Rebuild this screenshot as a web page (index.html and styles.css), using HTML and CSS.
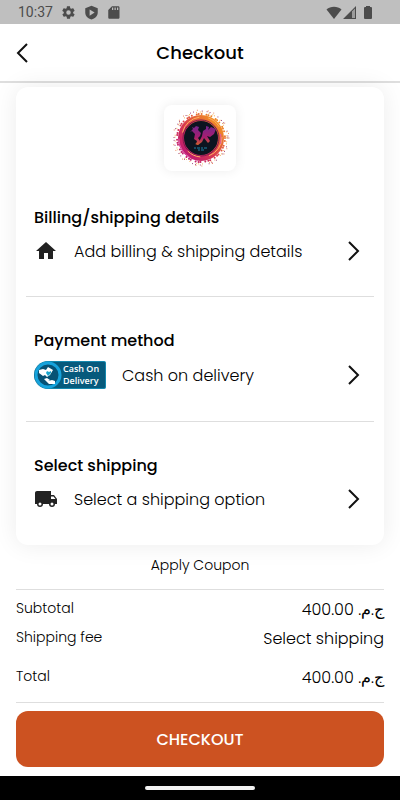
FILE: index.html
```html
<!DOCTYPE html>
<html lang="en">

<head>
    <meta charset="UTF-8">
    <meta name="viewport" content="width=device-width, initial-scale=1">
    <title>Checkout</title>
    <link rel="stylesheet" href="styles.css">
</head>

<body>
    <div class="status-bar">
        <span class="time">10:37</span>
        <svg class="status-icon" viewBox="0 0 24 24"><path d="M19.4 13a7.500 7.500 0 0 0 0-2l2.100-1.600c.2-.2.300-.4.100-.7l-2-3.400c-.1-.2-.4-.3-.6-.2l-2.500 1a7 7 0 0 0-1.700-1l-.4-2.700c0-.2-.2-.4-.5-.4h-4c-.2 0-.4.200-.5.400L9 5.100a7 7 0 0 0-1.700 1l-2.500-1c-.2-.1-.5 0-.6.200l-2 3.400c-.1.200-.1.500.1.700L4.500 11a7.500 7.500 0 0 0 0 2l-2.100 1.600c-.2.200-.2.400-.1.700l2 3.400c.1.200.4.300.6.200l2.500-1a7 7 0 0 0 1.700 1l.4 2.700c.1.200.2.400.5.400h4c.2 0 .4-.2.500-.4l.4-2.700a7 7 0 0 0 1.700-1l2.500 1c.2.100.5 0 .6-.2l2-3.400c.1-.2.100-.5-.1-.7zM12 15.600a3.600 3.600 0 1 1 0-7.200 3.600 3.600 0 0 1 0 7.200z"/></svg>
        <svg class="status-icon" viewBox="0 0 24 24"><path fill-rule="evenodd" d="M12 1 2 5v7c0 5.500 4.200 9.700 10 11 5.800-1.300 10-5.500 10-11V5zM9 7l8 5-8 5z"/></svg>
        <svg class="status-icon" viewBox="0 0 24 24"><path fill-rule="evenodd" d="M18 2H8L2 8v12c0 1.100.9 2 2 2h14c1 0 2-.9 2-2V4c0-1.100-1-2-2-2zM8 4h2v4H8zM12 4h2v4h-2zM16 4h2v4h-2z"/></svg>
        <div class="signals">
            <svg class="wifi" viewBox="0 0 16 13"><path d="M8 13 .5 3.500C4.500-.2 11.500-.2 15.500 3.500z"/></svg>
            <svg class="cell" viewBox="0 0 13 13"><path d="M13 0v13H0zM9 5.500V12h3V2.500z" fill-rule="evenodd"/><path d="M9 5.500 12 2.500V12H9z" opacity=".3"/></svg>
            <svg class="battery" viewBox="0 0 8 13"><path d="M2 0h4v1h1a1 1 0 0 1 1 1v10a1 1 0 0 1-1 1H1a1 1 0 0 1-1-1V2a1 1 0 0 1 1-1h1z"/></svg>
        </div>
    </div>

    <header class="header">
        <button class="back" type="button" aria-label="Back">
            <svg viewBox="0 0 12 20"><path d="M11 1 2 10l9 9"/></svg>
        </button>
        <h1 class="title">Checkout</h1>
    </header>

    <main class="content">
        <div class="card">
            <div class="logo">
                <svg viewBox="0 0 60 60">
                    <defs>
                        <linearGradient id="ring" x1="0" y1="1" x2="1" y2="0">
                            <stop offset="0" stop-color="#b5107c"/>
                            <stop offset=".45" stop-color="#d93a4e"/>
                            <stop offset="1" stop-color="#f7a31c"/>
                        </linearGradient>
                        <linearGradient id="dancers" x1="0" y1="0" x2="0" y2="1">
                            <stop offset="0" stop-color="#74268c"/>
                            <stop offset=".6" stop-color="#a81d70"/>
                            <stop offset="1" stop-color="#d2622c"/>
                        </linearGradient>
                    </defs>
                    <!-- paint splatter -->
                    <g fill="none" stroke-linecap="round">
                        <circle cx="31" cy="30" r="24" stroke="url(#ring)" stroke-width="2" stroke-dasharray="0 3 0 5 0 2"/>
                        <circle cx="31" cy="30" r="26" stroke="#f2a233" stroke-width="1" stroke-dasharray="0 4 0 2 0 7"/>
                        <circle cx="31" cy="30" r="27" stroke="#8f1d62" stroke-width="1" stroke-dasharray="0 9 0 5 0 3"/>
                        <circle cx="31" cy="30" r="28" stroke="#e8703a" stroke-width="1" stroke-dasharray="0 11 0 6 0 15"/>
                    </g>
                    <circle cx="31" cy="30" r="20" fill="#0c1420" stroke="url(#ring)" stroke-width="6"/>
                    <circle cx="31" cy="30" r="18" fill="none" stroke="#7e1650" stroke-width="1"/>
                    <circle cx="32" cy="29" r="20" fill="none" stroke="#ffb060" stroke-width="1" stroke-dasharray="24 9 14 20"/>
                    <circle cx="30" cy="31" r="21" fill="none" stroke="#e15aa8" stroke-width="1" stroke-dasharray="5 38 23 60"/>
                    <g fill="url(#dancers)">
                        <path d="m22 19 2 1 2-2 3 1-1 3 3 3-1 3-2 2 2 3-2 4-2-1 1-3-3-2 1-5-3-3-2 1 3-3z"/>
                        <path d="m36 18 3 1-1 3 3-3 5 2-2 5-4 3-3-1 3 5-2 2-4-5-2 4-4 3-3-1 4-2 3-6 1-5 3-2z"/>
                    </g>
                    <path d="M24 40h14M28 42h7" fill="none" stroke="#1a83a8" stroke-width="1" stroke-dasharray="2 1 3 1"/>
                </svg>
            </div>

            <section class="step">
                <h2 class="step-title">Billing/shipping details</h2>
                <button class="step-row" type="button">
                    <svg class="step-icon" viewBox="0 0 24 24"><path d="M10 20v-6h4v6h5v-8h3L12 3 2 12h3v8z"/></svg>
                    <span class="step-text">Add billing &amp; shipping details</span>
                    <svg class="chevron" viewBox="0 0 12 20"><path d="m1 1 9 9-9 9"/></svg>
                </button>
            </section>

            <section class="step">
                <h2 class="step-title">Payment method</h2>
                <button class="step-row payment" type="button">
                    <span class="cod">
                        <svg class="cod-icon" viewBox="0 0 28 28">
                            <circle cx="14" cy="14" r="12" fill="#075275" stroke="#16a3dc" stroke-width="3"/>
                            <path fill="#fff" d="m5 9 4-1 3 1 2-3 5 3-3 5-3 2-2-2-2 1-4-3zM10 18l3-1 3 2-2 1 4-1 3 1v3h-6z"/>
                            <path fill="#18a5cd" d="m13 10 2 1 2-1v2l-3 3-2-3z"/>
                        </svg>
                        <span class="cod-text">Cash On<br>Delivery</span>
                    </span>
                    <span class="step-text">Cash on delivery</span>
                    <svg class="chevron" viewBox="0 0 12 20"><path d="m1 1 9 9-9 9"/></svg>
                </button>
            </section>

            <section class="step">
                <h2 class="step-title">Select shipping</h2>
                <button class="step-row" type="button">
                    <svg class="step-icon" viewBox="0 0 24 24"><path fill-rule="evenodd" d="M20 8h-3V4H3c-1.100 0-2 .9-2 2v11h2a3 3 0 0 0 6 0h6a3 3 0 0 0 6 0h2v-5zM6 18.500a1.500 1.500 0 1 1 0-3 1.500 1.500 0 0 1 0 3zM19.500 9.500l2 2.500H17V9.500zM18 18.500a1.500 1.500 0 1 1 0-3 1.500 1.500 0 0 1 0 3z"/></svg>
                    <span class="step-text">Select a shipping option</span>
                    <svg class="chevron" viewBox="0 0 12 20"><path d="m1 1 9 9-9 9"/></svg>
                </button>
            </section>
        </div>

        <button class="coupon" type="button">Apply Coupon</button>

        <dl class="summary">
            <div class="summary-row">
                <dt>Subtotal</dt>
                <dd dir="rtl">ج.م. 400.00</dd>
            </div>
            <div class="summary-row">
                <dt>Shipping fee</dt>
                <dd>Select shipping</dd>
            </div>
            <div class="summary-row total">
                <dt>Total</dt>
                <dd dir="rtl">ج.م. 400.00</dd>
            </div>
        </dl>

        <button class="checkout" type="button">CHECKOUT</button>
    </main>

    <div class="nav-bar">
        <div class="nav-handle"></div>
    </div>
</body>

</html>
```

FILE: styles.css
```css
* {
    box-sizing: border-box;
}

body {
    display: flex;
    flex-direction: column;
    min-height: 100vh;
    margin: 0;
    background: #fff;
    color: #000;
    font-family: Poppins, Inter, "Noto Sans", sans-serif;
    font-weight: 300;
}

button {
    padding: 0;
    border: 0;
    background: none;
    color: inherit;
    font: inherit;
    cursor: pointer;
}

h1,
h2,
dl,
dd {
    margin: 0;
}

/* status bar */
.status-bar {
    display: flex;
    align-items: center;
    gap: 8px;
    height: 24px;
    padding: 0 28px 0 18px;
    background: #bfbfbf;
    color: #4c4c4c;
    font-family: Roboto, sans-serif;
    font-size: 14px;
    font-weight: 400;
}

.status-bar svg {
    fill: #4c4c4c;
}

.status-icon {
    width: 15px;
    height: 15px;
}

.signals {
    display: flex;
    align-items: center;
    gap: 1px;
    margin-left: auto;
}

.wifi {
    width: 16px;
    height: 13px;
}

.cell {
    width: 13px;
    height: 13px;
}

.battery {
    width: 8px;
    height: 13px;
    margin-left: 7px;
}

/* header */
.header {
    display: grid;
    grid-template-columns: 44px 1fr 44px;
    align-items: center;
    height: 59px;
    border-bottom: 2px solid #dedede;
}

.back {
    display: flex;
    justify-content: center;
    align-items: center;
    height: 44px;
}

.back svg,
.chevron {
    width: 12px;
    height: 20px;
    fill: none;
    stroke: #111;
    stroke-width: 2;
}

.title {
    font-size: 18px;
    font-weight: 500;
    text-align: center;
}

/* main content */
.content {
    flex: 1;
    padding: 4px 16px 8px;
}

.card {
    padding: 18px 10px 1px;
    border-radius: 12px;
    background: #fff;
    box-shadow: 0 0 24px rgba(0, 0, 0, 0.08);
}

.logo {
    width: 72px;
    height: 66px;
    margin: 0 auto 35px;
    padding: 3px 6px;
    border-radius: 8px;
    background: #fff;
    box-shadow: 0 0 12px rgba(0, 0, 0, 0.08);
}

.logo svg {
    display: block;
    width: 60px;
    height: 60px;
}

.step {
    padding: 0 0 24px;
}

.step + .step {
    padding-top: 32px;
    border-top: 1px solid #dedede;
}

.step-title {
    padding: 0 8px;
    font-size: 16px;
    font-weight: 500;
    line-height: 24px;
}

.step-row {
    display: flex;
    align-items: center;
    gap: 16px;
    width: 100%;
    height: 42px;
    padding: 0 14px 0 8px;
    font-size: 16px;
    text-align: left;
}

.step-row.payment {
    height: 44px;
}

.step-icon {
    width: 24px;
    height: 24px;
    fill: #222;
}

.step-text {
    flex: 1;
}

/* cash on delivery badge */
.cod {
    display: flex;
    align-items: center;
    gap: 1px;
    width: 72px;
    height: 28px;
    border: 1px solid #1388ae;
    border-left: 0;
    border-radius: 14px 2px 2px 14px;
    background: #075a7c;
}

.cod-icon {
    width: 28px;
    height: 28px;
}

.cod-text {
    color: #fff;
    font-family: "Open Sans", sans-serif;
    font-size: 9px;
    font-weight: 600;
    line-height: 12px;
}

.coupon {
    display: block;
    margin: 10px auto 14px;
    font-size: 14px;
    line-height: 20px;
}

/* order summary */
.summary {
    display: flex;
    flex-direction: column;
    gap: 5px;
    padding: 8px 0 12px;
    border-top: 1px solid #dedede;
    border-bottom: 1px solid #dedede;
}

.summary-row {
    display: flex;
    justify-content: space-between;
}

.summary-row dt {
    font-size: 14px;
    line-height: 20px;
}

.summary-row dd {
    font-size: 16px;
    line-height: 24px;
}

.summary-row.total {
    margin-top: 10px;
}

.checkout {
    width: 100%;
    height: 56px;
    margin-top: 8px;
    border-radius: 12px;
    background: #cc5221;
    color: #fff;
    font-size: 16px;
    font-weight: 500;
}

/* gesture bar */
.nav-bar {
    display: flex;
    justify-content: center;
    align-items: center;
    height: 24px;
    background: #000;
}

.nav-handle {
    width: 110px;
    height: 4px;
    border-radius: 2px;
    background: #f2f2f2;
}
```
